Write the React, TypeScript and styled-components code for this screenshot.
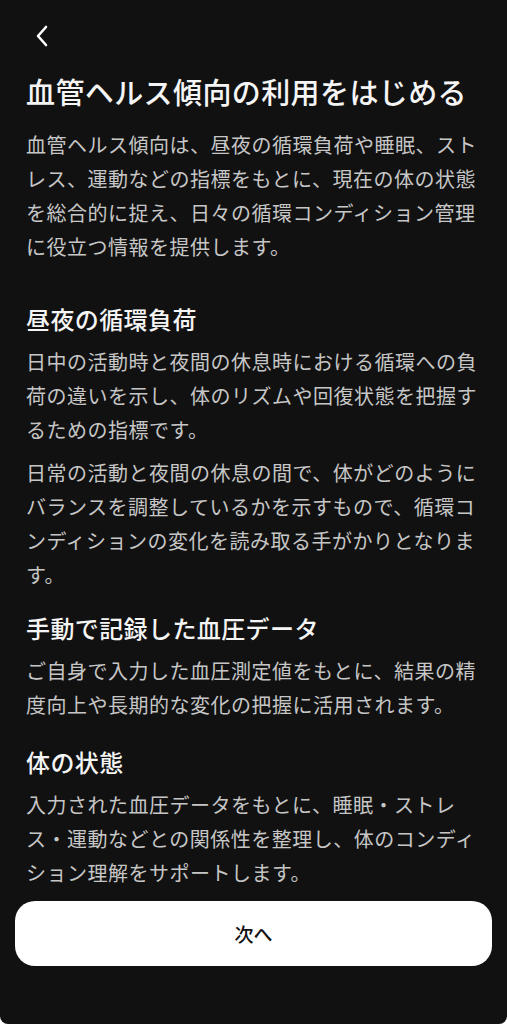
import React from "react";
import styled, { createGlobalStyle } from "styled-components";

const Global = createGlobalStyle`
  html, body { margin: 0; padding: 0; background: #ffffff; }
  body { font-family: "Noto Sans CJK JP", "Noto Sans", sans-serif; }
  * { box-sizing: border-box; }
`;

const Screen = styled.div`
  width: 507px;
  height: 1024px;
  background: #111111;
  border-radius: 0 0 8px 8px;
  display: flex;
  flex-direction: column;
  overflow: hidden;
  line-break: strict;
`;

const Content = styled.div`
  flex: 1;
  overflow: hidden;
  padding: 0 26px 0 26px;
  display: flex;
  flex-direction: column;
`;

const TopBar = styled.div`
  height: 71px;
  display: flex;
  align-items: flex-start;
  padding-top: 22px;
`;

const BackButton = styled.button`
  width: 28px;
  height: 28px;
  padding: 0;
  margin-left: 8px;
  background: none;
  border: none;
  display: flex;
  align-items: center;
  justify-content: flex-start;
  cursor: pointer;
`;

const Title = styled.h1`
  margin: 0;
  font-size: 29px;
  letter-spacing: 0.4px;
  line-height: 40px;
  font-weight: 500;
  color: #f5f5f5;
`;

const Paragraph = styled.p<{ $gap?: number }>`
  margin: ${(p) => p.$gap ?? 0}px 0 0 0;
  font-size: 20px;
  letter-spacing: 0.5px;
  line-height: 34px;
  font-weight: 400;
  color: #c6c6c6;
`;

const Section = styled.section<{ $gap: number }>`
  margin-top: ${(p) => p.$gap}px;
  display: flex;
  flex-direction: column;
`;

const Heading = styled.h2`
  margin: 0 0 9px 0;
  font-size: 24px;
  letter-spacing: 0.4px;
  line-height: 34px;
  font-weight: 500;
  color: #f5f5f5;
`;

const Footer = styled.div`
  padding: 0 15px 58px 15px;
`;

const PrimaryButton = styled.button`
  width: 100%;
  height: 65px;
  border: none;
  border-radius: 20px;
  background: #ffffff;
  color: #111111;
  font-family: "Noto Sans CJK JP", "Noto Sans", sans-serif;
  font-size: 19px;
  font-weight: 500;
  display: flex;
  align-items: center;
  justify-content: center;
  cursor: pointer;
`;

const ChevronLeft = () => (
  <svg width="16" height="24" viewBox="0 0 16 24" fill="none">
    <path
      d="M12 3 L4 12 L12 21"
      stroke="#ffffff"
      strokeWidth="2.6"
      strokeLinecap="round"
      strokeLinejoin="round"
    />
  </svg>
);

const sections = [
  {
    heading: "昼夜の循環負荷",
    gap: 38,
    paragraphs: [
      "日中の活動時と夜間の休息時における循環への負荷の違いを示し、体のリズムや回復状態を把握するための指標です。",
      "日常の活動と夜間の休息の間で、体がどのようにバランスを調整しているかを示すもので、循環コンディションの変化を読み取る手がかりとなります。",
    ],
  },
  {
    heading: "手動で記録した血圧データ",
    gap: 19,
    paragraphs: [
      "ご自身で入力した血圧測定値をもとに、結果の精度向上や長期的な変化の把握に活用されます。",
    ],
  },
  {
    heading: "体の状態",
    gap: 23,
    paragraphs: [
      "入力された血圧データをもとに、睡眠・ストレス・運動などとの関係性を整理し、体のコンディション理解をサポートします。",
    ],
  },
];

export default function App() {
  return (
    <>
      <Global />
      <Screen>
        <Content>
          <TopBar>
            <BackButton aria-label="戻る">
              <ChevronLeft />
            </BackButton>
          </TopBar>
          <Title>血管ヘルス傾向の利用をはじめる</Title>
          <Paragraph $gap={17}>
            血管ヘルス傾向は、昼夜の循環負荷や睡眠、ストレス、運動などの指標をもとに、現在の体の状態を総合的に捉え、日々の循環コンディション管理に役立つ情報を提供します。
          </Paragraph>
          {sections.map((s) => (
            <Section key={s.heading} $gap={s.gap}>
              <Heading>{s.heading}</Heading>
              {s.paragraphs.map((p, i) => (
                <Paragraph key={i} $gap={i === 0 ? 0 : 9}>
                  {p}
                </Paragraph>
              ))}
            </Section>
          ))}
        </Content>
        <Footer>
          <PrimaryButton>次へ</PrimaryButton>
        </Footer>
      </Screen>
    </>
  );
}
